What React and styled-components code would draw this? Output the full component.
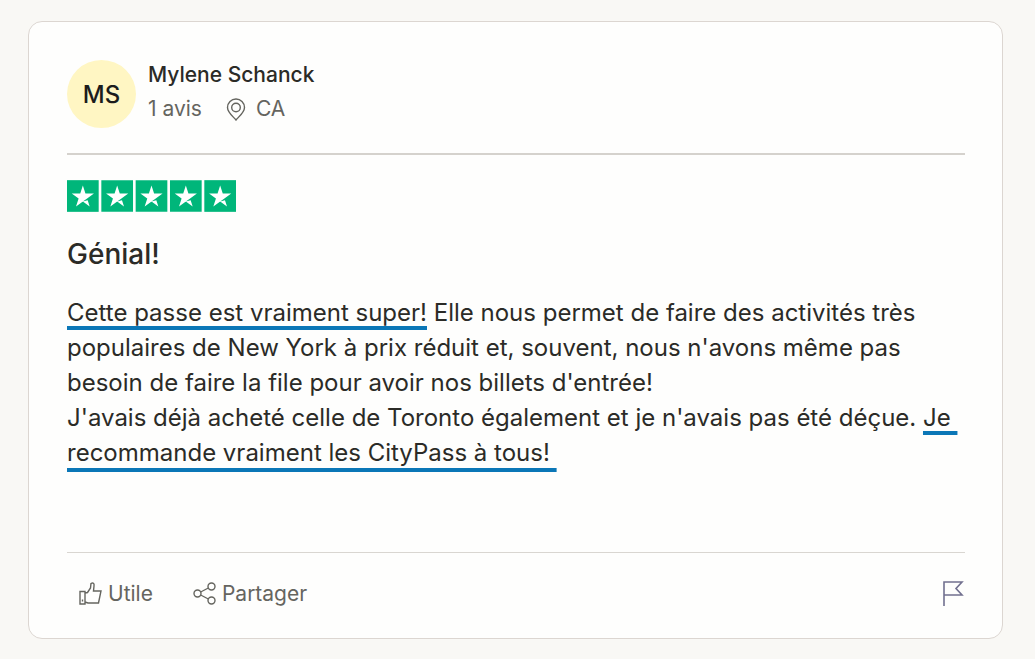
import styled, { createGlobalStyle } from 'styled-components';

const GlobalStyle = createGlobalStyle`
  * {
    box-sizing: border-box;
  }
  body {
    margin: 0;
    background: #f9f8f5;
    color: #2b2b27;
    font-family: Inter, 'Liberation Sans', sans-serif;
  }
`;

const Page = styled.main`
  padding: 21px 32px 20px 28px;
`;

const Card = styled.article`
  padding: 38px 37px 20px 38px;
  border: 1px solid #dcd6d1;
  border-radius: 14px;
  background: #fefefd;
`;

const Header = styled.header`
  display: flex;
  align-items: center;
  gap: 12px;
  padding-bottom: 25px;
  border-bottom: 2px solid #d5d2cd;
`;

const Avatar = styled.div`
  display: flex;
  align-items: center;
  justify-content: center;
  flex: none;
  width: 69px;
  height: 68px;
  border-radius: 50%;
  background: #fff6c3;
  color: #1c1c1c;
  font-size: 24px;
  font-weight: 500;
`;

const Name = styled.div`
  color: #2b2b27;
  font-size: 21px;
  font-weight: 500;
  line-height: 30px;
`;

const Details = styled.div`
  display: flex;
  align-items: center;
  gap: 24px;
  color: #65655f;
  font-size: 21px;
  line-height: 38px;
`;

const Place = styled.span`
  display: flex;
  align-items: center;
  gap: 10px;
`;

const Icon = styled.svg`
  flex: none;
  fill: none;
  stroke: ${({ $color }) => $color || '#65655f'};
  stroke-width: ${({ $weight }) => $weight || 1.4};
`;

const Stars = styled.svg`
  display: block;
  margin: 25px 0 23px;
`;

const Title = styled.h2`
  margin: 0 0 22px;
  font-size: 28px;
  font-weight: 500;
  line-height: 38px;
`;

const Text = styled.p`
  margin: 0 0 82px;
  font-size: 24px;
  line-height: 35px;
`;

const Marked = styled.span`
  text-decoration: underline #0b77b7 4px;
  text-decoration-skip-ink: none;
  text-underline-offset: ${({ $offset }) => $offset || 5}px;
`;

const Footer = styled.footer`
  display: flex;
  align-items: center;
  gap: 40px;
  padding: 15px 0 0 12px;
  border-top: 1px solid #d9d6d1;
`;

const Action = styled.button`
  display: flex;
  align-items: center;
  gap: 6px;
  height: 50px;
  padding: 0;
  border: 0;
  background: none;
  color: #65655f;
  font: inherit;
  font-size: 21px;
  cursor: pointer;
`;

const FlagButton = styled(Action)`
  margin-left: auto;
`;

const Star = ({ x }) => (
  <g transform={`translate(${x} 0)`}>
    <path fill="#00b67a" d="M0 0h96v96H0z" />
    <path
      fill="#fff"
      d="M48 64.7 62.6 61l6.1 18.8L48 64.7zm33.6-24.3H55.9L48 16.2l-7.9 24.2H14.4l20.8 15-7.9 24.2 20.8-15 12.8-9.2 20.7-15z"
    />
  </g>
);

const App = () => (
  <>
    <GlobalStyle />
    <Page>
      <Card>
        <Header>
          <Avatar>MS</Avatar>
          <div>
            <Name>Mylene Schanck</Name>
            <Details>
              <span>1 avis</span>
              <Place>
                <Icon width="20" height="24" viewBox="0 0 20 24" aria-hidden="true">
                  <path d="M10 23C7.4 19.8 1.5 15.5 1.5 10.5a8.5 8.5 0 0 1 17 0C18.5 15.500 12.600 19.800 10 23z" />
                  <circle cx="10" cy="10.500" r="4.300" />
                </Icon>
                CA
              </Place>
            </Details>
          </div>
        </Header>
        <Stars width="169" height="32" viewBox="0 0 512 96" role="img" aria-label="5/5">
          {[0, 104, 208, 312, 416].map((x) => (
            <Star key={x} x={x} />
          ))}
        </Stars>
        <Title>Génial!</Title>
        <Text>
          <Marked>Cette passe est vraiment super!</Marked> Elle nous permet de faire des activités très
          <br />
          populaires de New York à prix réduit et, souvent, nous n'avons même pas
          <br />
          besoin de faire la file pour avoir nos billets d'entrée!
          <br />
          J'avais déjà acheté celle de Toronto également et je n'avais pas été déçue.{' '}
          <Marked>Je&nbsp;</Marked>
          <br />
          <Marked $offset={7}>recommande vraiment les CityPass à tous!&nbsp;</Marked>
        </Text>
        <Footer>
          <Action type="button">
            <Icon width="23" height="24" viewBox="0 0 23 24" aria-hidden="true">
              <path d="M1 10.500h5V23H1zM6 12l2.500-.500L11.500 7l.5-4.500c2-1.300 3.500-.2 3 2.500L14.500 10H22l-2.500 12H9l-3-1" />
              <path d="M3.500 18.500v2" />
            </Icon>
            Utile
          </Action>
          <Action type="button">
            <Icon width="23" height="24" viewBox="0 0 23 24" aria-hidden="true">
              <circle cx="4.500" cy="12.500" r="3.500" />
              <circle cx="18.500" cy="5.500" r="3.500" />
              <circle cx="18.500" cy="19.500" r="3.500" />
              <path d="m7.700 11 7.600-4M7.700 14l7.600 4" />
            </Icon>
            Partager
          </Action>
          <FlagButton type="button" aria-label="Signaler">
            <Icon $color="#71708f" $weight={1.6} width="22" height="26" viewBox="0 0 22 26" aria-hidden="true">
              <path d="M1 26V2h18l-6 6.500 6 6.500H1" />
            </Icon>
          </FlagButton>
        </Footer>
      </Card>
    </Page>
  </>
);

export default App;
